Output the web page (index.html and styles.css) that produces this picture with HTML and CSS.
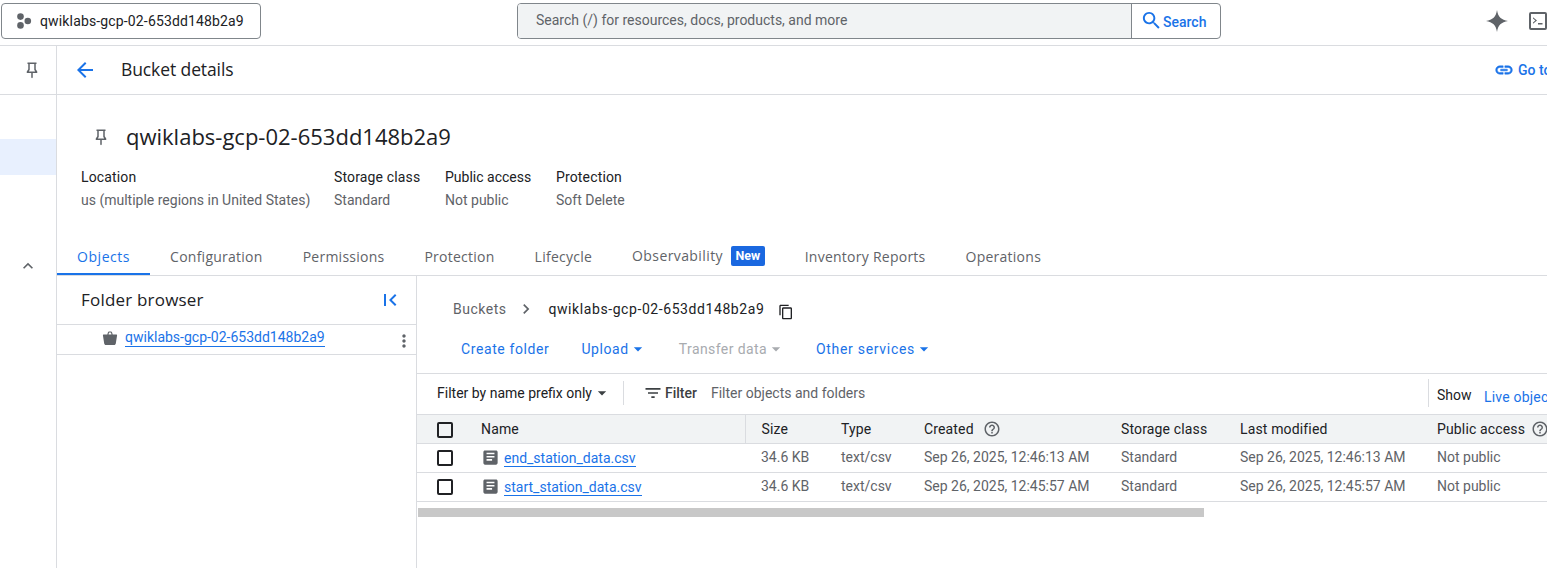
FILE: index.html
```html
<!DOCTYPE html>
<html lang="en">
<head>
    <meta charset="UTF-8">
    <title>Bucket details</title>
    <link rel="stylesheet" href="styles.css">
</head>
<body>

<svg class="sprite" width="0" height="0">
    <symbol id="i-pin" viewBox="0 0 24 24"><path fill-rule="evenodd" d="M6 2h12v2h-1v7l2 3v2h-6v6l-1 1-1-1v-6H5v-2l2-3V4H6V2zm3 2v7.600L7.800 14h8.400L15 11.600V4H9z"/></symbol>
    <symbol id="i-drop" viewBox="0 0 24 24"><path d="M7 10l5 5 5-5z"/></symbol>
    <symbol id="i-help" viewBox="0 0 24 24"><path d="M11 18h2v-2h-2v2zm1-16C6.48 2 2 6.48 2 12s4.48 10 10 10 10-4.48 10-10S17.52 2 12 2zm0 18c-4.41 0-8-3.59-8-8s3.59-8 8-8 8 3.59 8 8-3.59 8-8 8zm0-14c-2.21 0-4 1.79-4 4h2c0-1.1.9-2 2-2s2 .9 2 2c0 2-3 1.75-3 5h2c0-2.25 3-2.5 3-5 0-2.21-1.79-4-4-4z"/></symbol>
    <symbol id="i-file" viewBox="0 0 24 24"><path d="M19 3H5c-1.1 0-2 .9-2 2v14c0 1.1.9 2 2 2h14c1.1 0 2-.9 2-2V5c0-1.1-.9-2-2-2zm-5 13H7v-2h7v2zm3-4H7v-2h10v2zm0-4H7V6h10v2z"/></symbol>
</svg>

<header class="topbar">
    <button class="project-picker">
        <svg class="icon-project" viewBox="0 0 16 16"><circle cx="4.5" cy="3.6" r="3.3"/><circle cx="11.8" cy="8" r="3.3"/><circle cx="4.5" cy="12.4" r="3.3"/></svg>
        <span>qwiklabs-gcp-02-653dd148b2a9</span>
    </button>
    <div class="search">
        <div class="search-input">Search (/) for resources, docs, products, and more</div>
        <div class="search-btn">
            <svg class="icon-search" viewBox="0 0 24 24"><path d="M15.5 14h-.79l-.28-.27C15.41 12.59 16 11.11 16 9.5 16 5.91 13.09 3 9.5 3S3 5.91 3 9.5 5.91 16 9.5 16c1.61 0 3.09-.59 4.23-1.57l.27.28v.79l5 4.99L20.49 19l-4.99-5zm-6 0C7.01 14 5 11.99 5 9.5S7.01 5 9.5 5 14 7.01 14 9.5 11.99 14 9.5 14z"/></svg>
            Search
        </div>
    </div>
    <div class="top-icons">
        <svg class="icon-spark" viewBox="0 0 24 24"><path d="M12 1c.9 6.6 4.4 10.100 11 11-6.600.9-10.100 4.400-11 11-.9-6.600-4.400-10.100-11-11 6.600-.9 10.100-4.400 11-11z"/></svg>
        <svg class="icon-terminal" viewBox="0 0 20 20"><path d="M3 1h14a2 2 0 0 1 2 2v14a2 2 0 0 1-2 2H3a2 2 0 0 1-2-2V3a2 2 0 0 1 2-2zm0 2v14h14V3H3zm2 3.200 4 3.300-4 3.300V11.400l2.300-1.900L5 7.600V6.200zM10 12h4.500v1.500H10V12z"/></svg>
    </div>
</header>

<div class="layout">
    <nav class="rail">
        <div class="rail-top">
            <svg class="icon-pin" viewBox="0 0 24 24"><use href="#i-pin"/></svg>
        </div>
        <div class="rail-active"></div>
        <svg class="icon-up" viewBox="0 0 24 24"><path d="M7.41 15.41L12 10.83l4.59 4.58L18 14l-6-6-6 6z"/></svg>
    </nav>

    <main class="content">
        <div class="page-head">
            <svg class="icon-back" viewBox="0 0 24 24"><path d="M20 11H7.830l5.590-5.590L12 4l-8 8 8 8 1.410-1.410L7.830 13H20v-2z"/></svg>
            <h1 class="page-title">Bucket details</h1>
            <a class="go-link">
                <svg class="icon-link" viewBox="0 0 24 24"><path d="M3.900 12c0-1.710 1.390-3.100 3.100-3.100h4V7H7c-2.760 0-5 2.240-5 5s2.240 5 5 5h4v-1.900H7c-1.710 0-3.100-1.390-3.100-3.100zM8 13h8v-2H8v2zm9-6h-4v1.900h4c1.710 0 3.100 1.390 3.100 3.100s-1.390 3.100-3.100 3.100h-4V17h4c2.760 0 5-2.240 5-5s-2.240-5-5-5z"/></svg>
                Go to
            </a>
        </div>

        <section class="bucket-info">
            <div class="bucket-name">
                <svg class="icon-pin" viewBox="0 0 24 24"><use href="#i-pin"/></svg>
                <h2>qwiklabs-gcp-02-653dd148b2a9</h2>
            </div>
            <div class="meta">
                <div class="meta-col meta-location"><b>Location</b><span>us (multiple regions in United States)</span></div>
                <div class="meta-col meta-class"><b>Storage class</b><span>Standard</span></div>
                <div class="meta-col meta-access"><b>Public access</b><span>Not public</span></div>
                <div class="meta-col"><b>Protection</b><span>Soft Delete</span></div>
            </div>
        </section>

        <div class="tabs">
            <a class="tab active">Objects</a>
            <a class="tab">Configuration</a>
            <a class="tab">Permissions</a>
            <a class="tab">Protection</a>
            <a class="tab">Lifecycle</a>
            <a class="tab tab-new">Observability <span class="badge">New</span></a>
            <a class="tab">Inventory Reports</a>
            <a class="tab">Operations</a>
        </div>

        <div class="browser">
            <aside class="folders">
                <div class="folders-head">
                    <span>Folder browser</span>
                    <svg class="icon-collapse" viewBox="0 0 24 24"><path d="M18.410 16.590L13.820 12l4.590-4.590L17 6l-6 6 6 6zM6 6h2v12H6z"/></svg>
                </div>
                <div class="folder-row">
                    <svg class="icon-bucket" viewBox="0 0 16 16"><path d="M5.200 5 5.800 2.800C6 2 6.700 1.500 7.400 1.500h1.200c.7 0 1.400.5 1.600 1.300L10.800 5H9.600l-.5-2c-.1-.2-.3-.4-.5-.4H7.400c-.2 0-.4.2-.5.4L6.400 5H5.200zM1.500 4.500h13c.4 0 .6.300.6.700l-1.300 8.300c-.1.900-.8 1.500-1.700 1.500H3.900c-.9 0-1.600-.6-1.700-1.500L.9 5.200c0-.4.2-.7.600-.7z"/></svg>
                    <a class="link">qwiklabs-gcp-02-653dd148b2a9</a>
                    <svg class="icon-more" viewBox="0 0 24 24"><path d="M12 8c1.100 0 2-.9 2-2s-.9-2-2-2-2 .9-2 2 .9 2 2 2zm0 2c-1.100 0-2 .9-2 2s.9 2 2 2 2-.9 2-2-.9-2-2-2zm0 6c-1.100 0-2 .9-2 2s.9 2 2 2 2-.9 2-2-.9-2-2-2z"/></svg>
                </div>
            </aside>

            <section class="objects">
                <div class="crumbs">
                    <span class="crumb">Buckets</span>
                    <svg class="icon-chevron" viewBox="0 0 24 24"><path d="M10 6L8.590 7.410 13.170 12l-4.580 4.590L10 18l6-6z"/></svg>
                    <span class="crumb-current">qwiklabs-gcp-02-653dd148b2a9</span>
                    <svg class="icon-copy" viewBox="0 0 24 24"><path d="M16 1H4c-1.100 0-2 .9-2 2v14h2V3h12V1zm3 4H8c-1.100 0-2 .9-2 2v14c0 1.100.9 2 2 2h11c1.100 0 2-.9 2-2V7c0-1.100-.9-2-2-2zm0 16H8V7h11v14z"/></svg>
                </div>

                <div class="actions">
                    <a class="action action-first">Create folder</a>
                    <a class="action">Upload<svg class="icon-drop" viewBox="0 0 24 24"><use href="#i-drop"/></svg></a>
                    <a class="action disabled">Transfer data<svg class="icon-drop" viewBox="0 0 24 24"><use href="#i-drop"/></svg></a>
                    <a class="action action-other">Other services<svg class="icon-drop" viewBox="0 0 24 24"><use href="#i-drop"/></svg></a>
                </div>

                <div class="filterbar">
                    <span class="prefix">Filter by name prefix only<svg class="icon-drop" viewBox="0 0 24 24"><use href="#i-drop"/></svg></span>
                    <span class="filter-label">
                        <svg class="icon-filter" viewBox="0 0 24 24"><path d="M10 18h4v-2h-4v2zM3 6v2h18V6H3zm3 7h12v-2H6v2z"/></svg>
                        Filter
                    </span>
                    <span class="filter-hint">Filter objects and folders</span>
                    <span class="show">Show</span>
                    <a class="live">Live objects</a>
                </div>

                <table class="grid">
                    <colgroup>
                        <col class="c-check"><col class="c-name"><col class="c-size"><col class="c-type">
                        <col class="c-date"><col class="c-class"><col class="c-date"><col class="c-public">
                    </colgroup>
                    <thead>
                        <tr>
                            <th class="cell-check"><span class="check"></span></th>
                            <th class="cell-name">Name</th>
                            <th class="cell-size">Size</th>
                            <th>Type</th>
                            <th class="cell-created">Created <svg class="icon-help" viewBox="0 0 24 24"><use href="#i-help"/></svg></th>
                            <th>Storage class</th>
                            <th>Last modified</th>
                            <th>Public access <svg class="icon-help" viewBox="0 0 24 24"><use href="#i-help"/></svg></th>
                        </tr>
                    </thead>
                    <tbody>
                        <tr>
                            <td class="cell-check"><span class="check"></span></td>
                            <td class="cell-file"><svg class="icon-file" viewBox="0 0 24 24"><use href="#i-file"/></svg><a class="link">end_station_data.csv</a></td>
                            <td class="cell-size">34.6 KB</td>
                            <td>text/csv</td>
                            <td>Sep 26, 2025, 12:46:13 AM</td>
                            <td>Standard</td>
                            <td>Sep 26, 2025, 12:46:13 AM</td>
                            <td>Not public</td>
                        </tr>
                        <tr>
                            <td class="cell-check"><span class="check"></span></td>
                            <td class="cell-file"><svg class="icon-file" viewBox="0 0 24 24"><use href="#i-file"/></svg><a class="link">start_station_data.csv</a></td>
                            <td class="cell-size">34.6 KB</td>
                            <td>text/csv</td>
                            <td>Sep 26, 2025, 12:45:57 AM</td>
                            <td>Standard</td>
                            <td>Sep 26, 2025, 12:45:57 AM</td>
                            <td>Not public</td>
                        </tr>
                    </tbody>
                </table>

                <div class="hscroll"></div>
            </section>
        </div>
    </main>
</div>

</body>
</html>
```

FILE: styles.css
```css
html, body {
    height: 100%;
}
body {
    margin: 0;
    overflow: hidden;
    font-family: Roboto, "Liberation Sans", sans-serif;
    font-size: 14px;
    color: #202124;
    background-color: #fff;
}
.sprite {
    position: absolute;
}
svg {
    display: block;
    fill: #5f6368;
    flex: none;
}
a {
    color: #1a73e8;
}
h1, h2 {
    margin: 0;
    font-weight: 400;
}

/* top bar */
.topbar {
    height: 45px;
    border-bottom: 1px solid #dadce0;
    display: flex;
    align-items: flex-start;
}
.project-picker {
    flex: none;
    margin: 3px 0 0 1px;
    width: 260px;
    height: 36px;
    box-sizing: border-box;
    border: 1px solid #80868b;
    border-radius: 4px;
    background: #fff;
    display: flex;
    align-items: center;
    gap: 8px;
    padding: 0 0 0 14px;
    font: 14px Roboto, sans-serif;
    letter-spacing: 0.15px;
    color: #202124;
}
.icon-project {
    width: 16px;
    height: 16px;
}
.search {
    flex: none;
    margin: 3px 0 0 256px;
    width: 704px;
    height: 36px;
    box-sizing: border-box;
    border: 1px solid #80868b;
    border-radius: 4px;
    display: flex;
    overflow: hidden;
}
.search-input {
    flex: 1;
    background-color: #f1f3f4;
    color: #5f6368;
    line-height: 33px;
    padding-left: 18px;
}
.search-btn {
    width: 89px;
    border-left: 1px solid #80868b;
    color: #1a73e8;
    font-weight: 500;
    display: flex;
    align-items: center;
    padding: 1px 0 0 8px;
    box-sizing: border-box;
}
.icon-search {
    width: 23px;
    height: 23px;
    fill: #1a73e8;
    margin-top: -2px;
}
.top-icons {
    flex: none;
    margin: 9px 0 0 264px;
    display: flex;
    align-items: center;
    gap: 19px;
}
.icon-spark {
    width: 24px;
    height: 24px;
}
.icon-terminal {
    width: 20px;
    height: 20px;
}

/* left rail */
.layout {
    display: flex;
    height: 522px;
}
.rail {
    width: 56px;
    flex: none;
    border-right: 1px solid #dadce0;
}
.rail-top {
    height: 48px;
    border-bottom: 1px solid #dadce0;
    margin-right: -1px;
    display: flex;
    align-items: center;
    padding-left: 23px;
}
.icon-pin {
    width: 18px;
    height: 18px;
}
.rail-active {
    height: 36px;
    margin-top: 44px;
    background-color: #e8f0fe;
}
.icon-up {
    width: 20px;
    height: 20px;
    margin: 81px 0 0 18px;
}

/* page head */
.content {
    flex: 1;
    min-width: 0;
    display: flex;
    flex-direction: column;
}
.page-head {
    height: 48px;
    border-bottom: 1px solid #dadce0;
    display: flex;
    align-items: center;
    padding-left: 16px;
}
.icon-back {
    width: 24px;
    height: 24px;
    fill: #1a73e8;
}
.page-title {
    font-family: "Open Sans", Roboto, sans-serif;
    font-size: 17.5px;
    margin-left: 24px;
    padding-bottom: 2px;
    letter-spacing: -0.1px;
}
.go-link {
    margin-left: auto;
    display: flex;
    align-items: center;
    gap: 4px;
    font-weight: 500;
    width: 53px;
    flex: none;
    white-space: nowrap;
    overflow: hidden;
}
.icon-link {
    width: 20px;
    height: 20px;
    fill: #1a73e8;
    stroke: #1a73e8;
    stroke-width: 0.6;
}

/* bucket summary */
.bucket-info {
    height: 145px;
    padding: 25px 0 0 24px;
    box-sizing: border-box;
}
.bucket-name {
    display: flex;
    align-items: center;
    height: 34px;
    padding-left: 11px;
    gap: 16px;
}
.bucket-name h2 {
    font-family: "Open Sans", Roboto, sans-serif;
    font-size: 22px;
    padding-bottom: 2px;
}
.meta {
    display: flex;
    margin-top: 15px;
}
.meta-col {
    display: flex;
    flex-direction: column;
    gap: 7px;
    line-height: 16px;
}
.meta-col b {
    font-weight: 400;
    letter-spacing: 0.15px;
    color: #202124;
}
.meta-col span {
    color: #5f6368;
}
.meta-location {
    width: 253px;
}
.meta-class {
    width: 111px;
}
.meta-access {
    width: 111px;
}
.meta-col.meta-access b {
    letter-spacing: 0;
}

/* tabs */
.tabs {
    height: 35px;
    border-bottom: 1px solid #dadce0;
    display: flex;
    flex: none;
}
.tab {
    padding: 0 20px;
    font-family: "Open Sans", Roboto, sans-serif;
    font-size: 14px;
    letter-spacing: 0.25px;
    color: #5f6368;
    line-height: 33px;
    white-space: nowrap;
}
.tab.active {
    color: #1a73e8;
    height: 33px;
    border-bottom: 2px solid #1a73e8;
    letter-spacing: 0.55px;
}
.tab-new {
    display: flex;
    align-items: center;
    gap: 8px;
    line-height: 32px;
    padding-bottom: 3px;
    letter-spacing: 0.4px;
}
.badge {
    background-color: #1a68e0;
    color: #fff;
    font-family: Roboto, sans-serif;
    font-size: 12.5px;
    font-weight: 700;
    letter-spacing: 0;
    line-height: 20px;
    height: 20px;
    padding: 0 4.5px;
    border-radius: 2px;
}

/* folder browser */
.browser {
    display: flex;
    flex: 1;
    min-height: 0;
}
.folders {
    width: 360px;
    flex: none;
    box-sizing: border-box;
    border-right: 1px solid #dadce0;
}
.folders-head {
    height: 46px;
    padding: 0 14px 2px 24px;
    border-bottom: 1px solid #dadce0;
    display: flex;
    align-items: center;
    justify-content: space-between;
    font-family: "Open Sans", Roboto, sans-serif;
    font-size: 17px;
    letter-spacing: 0.2px;
}
.icon-collapse {
    width: 24px;
    height: 24px;
    margin-top: 2px;
    fill: #1a73e8;
}
.folder-row {
    height: 29px;
    border-bottom: 1px solid #dadce0;
    display: flex;
    align-items: center;
    padding-left: 45px;
}
.icon-bucket {
    width: 16px;
    height: 16px;
    margin: 0 7px 3px 0;
}
.folder-row .link {
    margin-bottom: 4px;
}
.link {
    color: #1a73e8;
    border-bottom: 1px solid #1a73e8;
    line-height: 17px;
}
.icon-more {
    width: 20px;
    height: 20px;
    margin: 3px 2px 0 auto;
}

/* objects pane */
.objects {
    flex: 1;
    min-width: 0;
    overflow: hidden;
}
.crumbs {
    height: 67px;
    display: flex;
    align-items: center;
    padding: 0 0 2px 36px;
    box-sizing: border-box;
}
.crumb {
    color: #5f6368;
    letter-spacing: 0.5px;
}
.icon-chevron {
    width: 20px;
    height: 20px;
    margin: 0 12px 0 10px;
}
.crumb-current {
    letter-spacing: 0.58px;
}
.icon-copy {
    width: 16px;
    height: 16px;
    margin: 6px 0 0 14px;
    fill: #202124;
}
.actions {
    height: 30px;
    border-bottom: 1px solid #dadce0;
    display: flex;
    gap: 31px;
    padding-left: 44px;
    line-height: 12px;
}
.action {
    display: flex;
    align-items: flex-start;
    letter-spacing: 0.6px;
    height: 14px;
    white-space: nowrap;
}
.action-first {
    margin-right: 1px;
}
.action .icon-drop {
    width: 20px;
    height: 20px;
    fill: #1a73e8;
    margin: -4px 0 0 -1px;
}
.action.disabled {
    color: #a8abaf;
    letter-spacing: 0.4px;
    margin-right: -1px;
}
.action.disabled .icon-drop {
    fill: #a8abaf;
}
.action-other {
    letter-spacing: 0.7px;
}
.filterbar {
    height: 38px;
    padding: 0 0 2px 20px;
    display: flex;
    align-items: center;
    white-space: nowrap;
}
.prefix {
    flex: none;
    display: flex;
    align-items: center;
    height: 24px;
    padding-right: 11px;
    border-right: 1px solid #dadce0;
}
.prefix .icon-drop {
    width: 20px;
    height: 20px;
    fill: #3c4043;
}
.filter-label {
    flex: none;
    display: flex;
    align-items: center;
    gap: 2px;
    margin-left: 19px;
    font-weight: 500;
    color: #3c4043;
}
.icon-filter {
    width: 20px;
    height: 20px;
    fill: #3c4043;
}
.filter-hint {
    flex: none;
    color: #5f6368;
    margin-left: 14px;
    width: 717px;
}
.show {
    border-left: 1px solid #dadce0;
    padding: 4px 0 0 8px;
    line-height: 24px;
    height: 24px;
    width: 47px;
    flex: none;
}
.live {
    flex: none;
    margin-top: 7px;
    letter-spacing: 0.2px;
}

/* objects table */
.grid {
    border-collapse: collapse;
    table-layout: fixed;
    width: 1260px;
    border-top: 1px solid #dadce0;
}
.c-check { width: 64px; }
.c-name { width: 264px; }
.c-size { width: 96px; }
.c-type { width: 83px; }
.c-date { width: 197px; }
.c-class { width: 119px; }
.c-public { width: 240px; }
.grid th, .grid td {
    padding: 0;
    border-bottom: 1px solid #dadce0;
    font-size: 14px;
    font-weight: 400;
    text-align: left;
    white-space: nowrap;
    color: #5f6368;
}
.grid th {
    height: 28px;
    background-color: #f1f3f4;
    color: #202124;
    letter-spacing: 0.15px;
}
.grid td {
    height: 26px;
    padding-bottom: 2px;
}
.grid th svg {
    display: inline-block;
    vertical-align: -4px;
    margin-left: 2px;
}
.grid th.cell-created svg {
    margin-left: 6px;
}
.grid .cell-check {
    padding-left: 20px;
}
.grid td.cell-check {
    height: 28px;
    padding-bottom: 0;
}
.check {
    display: block;
    width: 12px;
    height: 12px;
    border: 2px solid #202124;
    border-radius: 2px;
}
th .check {
    margin-top: 2px;
}
.grid th.cell-name {
    border-right: 1px solid #dadce0;
}
.grid .cell-size {
    padding-left: 16px;
}
.cell-file svg {
    display: inline-block;
    vertical-align: -4px;
    margin-right: 4px;
}
.icon-help {
    width: 18px;
    height: 18px;
}
.icon-file {
    width: 19px;
    height: 19px;
}
.cell-file .link {
    line-height: 16px;
}
.hscroll {
    width: 786px;
    height: 9px;
    margin: 6px 0 0 1px;
    background-color: #c8c8c8;
}
```
